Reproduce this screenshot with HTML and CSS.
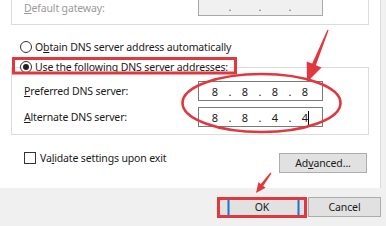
FILE: index.html
```html
<!DOCTYPE html>
<html>
<head>
<meta charset="utf-8">
<link rel="stylesheet" href="styles.css">
</head>
<body>
<div class="window">
  <div class="main">
    <div class="pane">
      <div class="group-top">
        <div class="field-row gateway">
          <span class="label disabled"><u>D</u>efault gateway:</span>
          <div class="ip ip-disabled">
            <span class="oct"></span><span class="dot">.</span><span class="oct"></span><span class="dot">.</span><span class="oct"></span><span class="dot">.</span><span class="oct"></span>
          </div>
        </div>
      </div>
      <div class="radio-row obtain">
        <span class="radio"></span><span>O<u>b</u>tain DNS server address automatically</span>
      </div>
      <fieldset class="dns-group">
        <legend class="radio-row"><span class="radio checked"></span><span>Use the following DNS server addresses:</span></legend>
        <div class="field-row">
          <span class="label"><u>P</u>referred DNS server:</span>
          <div class="ip">
            <span class="oct">8</span><span class="dot">.</span><span class="oct">8</span><span class="dot">.</span><span class="oct">8</span><span class="dot">.</span><span class="oct">8</span>
          </div>
        </div>
        <div class="field-row">
          <span class="label"><u>A</u>lternate DNS server:</span>
          <div class="ip">
            <span class="oct">8</span><span class="dot">.</span><span class="oct">8</span><span class="dot">.</span><span class="oct">4</span><span class="dot">.</span><span class="oct">4<i class="caret"></i></span>
          </div>
        </div>
      </fieldset>
      <div class="bottom-row">
        <div class="check-row"><span class="checkbox"></span><span>Va<u>l</u>idate settings upon exit</span></div>
        <button class="btn advanced">Ad<u>v</u>anced...</button>
      </div>
    </div>
    <div class="edge"></div>
  </div>
  <div class="footer">
    <button class="btn ok">OK</button>
    <button class="btn cancel">Cancel</button>
  </div>
  <svg class="marks" viewBox="0 0 386 226" width="386" height="226">
    <rect x="13.5" y="58.5" width="222" height="14.5" fill="none" stroke="#e0383e" stroke-width="3"/>
    <ellipse cx="261.5" cy="103" rx="79" ry="29" fill="none" stroke="#e0383e" stroke-width="2.6"/>
    <polygon points="327.4,29.8 328.6,30.2 315.9,65.2 321.5,67.4 307,82 306.7,61.4 312.2,63.6" fill="#e0383e"/>
    <polygon points="270.4,172.6 271.4,173.4 263.2,185.9 265.6,187.7 256,193 258.4,182.3 260.8,184.1" fill="#e0383e"/>
    <rect x="218.5" y="198.5" width="87" height="18" fill="none" stroke="#e0383e" stroke-width="3"/>
    <rect x="227.5" y="200" width="2" height="15" fill="#1f73c4"/>
    <rect x="297.5" y="200" width="2" height="15" fill="#1f73c4"/>
  </svg>
</div>
</body>
</html>
```

FILE: styles.css
```css
* { box-sizing: border-box; }
html, body { margin: 0; padding: 0; }
body {
  font-family: "Noto Sans", "Open Sans", sans-serif;
  font-size: 10.5px;
  letter-spacing: -0.15px;
  color: #1a1a1a;
  background: #f0f0f0;
  overflow: hidden;
}
u { text-decoration: underline; text-underline-offset: 1px; }
.window {
  position: relative;
  width: 386px;
  height: 226px;
  display: flex;
  flex-direction: column;
}
.main {
  display: flex;
  height: 188px;
}
.pane {
  width: 380px;
  height: 188px;
  background: #ffffff;
  display: flex;
  flex-direction: column;
}
.edge {
  flex: 1;
  background: #f0f0f0;
  border-left: 1px solid #dadada;
}
.group-top {
  margin-left: 11px;
  width: 358px;
  border: 1px solid #dcdcdc;
  border-top: none;
  padding: 0 0 8px 12px;
}
.field-row {
  display: flex;
  align-items: center;
  height: 20px;
}
.gateway {
  margin-top: -4px;
  align-items: flex-end;
}
.gateway .label {
  padding-bottom: 0;
  line-height: 16px;
}
.label {
  width: 174px;
  line-height: 16px;
}
.disabled { color: #9a9a9a; }
.ip {
  width: 125px;
  height: 20px;
  border: 1px solid #7a7a7a;
  background: #fff;
  display: flex;
  align-items: center;
  padding-left: 5px;
  font-size: 11px;
  letter-spacing: 0;
}
.ip-disabled {
  background: #f0f0f0;
  border-color: #a8a8a8;
  color: #6d6d6d;
}
.oct {
  width: 22px;
  text-align: center;
  position: relative;
}
.dot {
  width: 8px;
  text-align: center;
}
.caret {
  display: inline-block;
  width: 1px;
  height: 14px;
  background: #000;
  vertical-align: -3px;
  margin-right: -1px;
}
.radio-row {
  display: flex;
  align-items: center;
  gap: 3px;
  line-height: 16px;
}
.obtain {
  margin: 14px 0 0 20px;
}
.radio {
  width: 12px;
  height: 12px;
  border: 1px solid #333;
  border-radius: 50%;
  background: #fff;
  display: flex;
  align-items: center;
  justify-content: center;
}
.radio.checked::after {
  content: "";
  width: 6px;
  height: 6px;
  border-radius: 50%;
  background: #222;
}
.dns-group {
  margin: 4px 0 0 11px;
  width: 358px;
  min-inline-size: 0;
  border: 1px solid #dcdcdc;
  padding: 6px 0 7px 12px;
  display: flex;
  flex-direction: column;
  gap: 6px;
}
.dns-group legend {
  margin-left: -4px;
  padding: 0 2px 0 0;
}
.bottom-row {
  margin-top: 18px;
  display: flex;
  justify-content: space-between;
  align-items: flex-start;
  padding: 0 13px 0 24px;
}
.check-row {
  display: flex;
  align-items: center;
  gap: 4px;
  line-height: 16px;
  margin-top: -3px;
}
.checkbox {
  width: 12px;
  height: 12px;
  border: 1px solid #333;
  background: #fff;
}
.btn {
  font-family: inherit;
  font-size: 10.5px;
  letter-spacing: -0.1px;
  color: #1a1a1a;
  background: #e1e1e1;
  border: 1px solid #adadad;
  height: 20px;
  padding: 0;
  line-height: 16px;
}
.advanced { width: 88px; }
.footer {
  flex: 1;
  background: #f0f0f0;
  display: flex;
  justify-content: flex-end;
  align-items: flex-start;
  gap: 2px;
  padding: 9px 5px 0 0;
}
.ok { width: 88px; }
.cancel { width: 73px; }
.marks {
  position: absolute;
  left: 0;
  top: 0;
  pointer-events: none;
}
```
